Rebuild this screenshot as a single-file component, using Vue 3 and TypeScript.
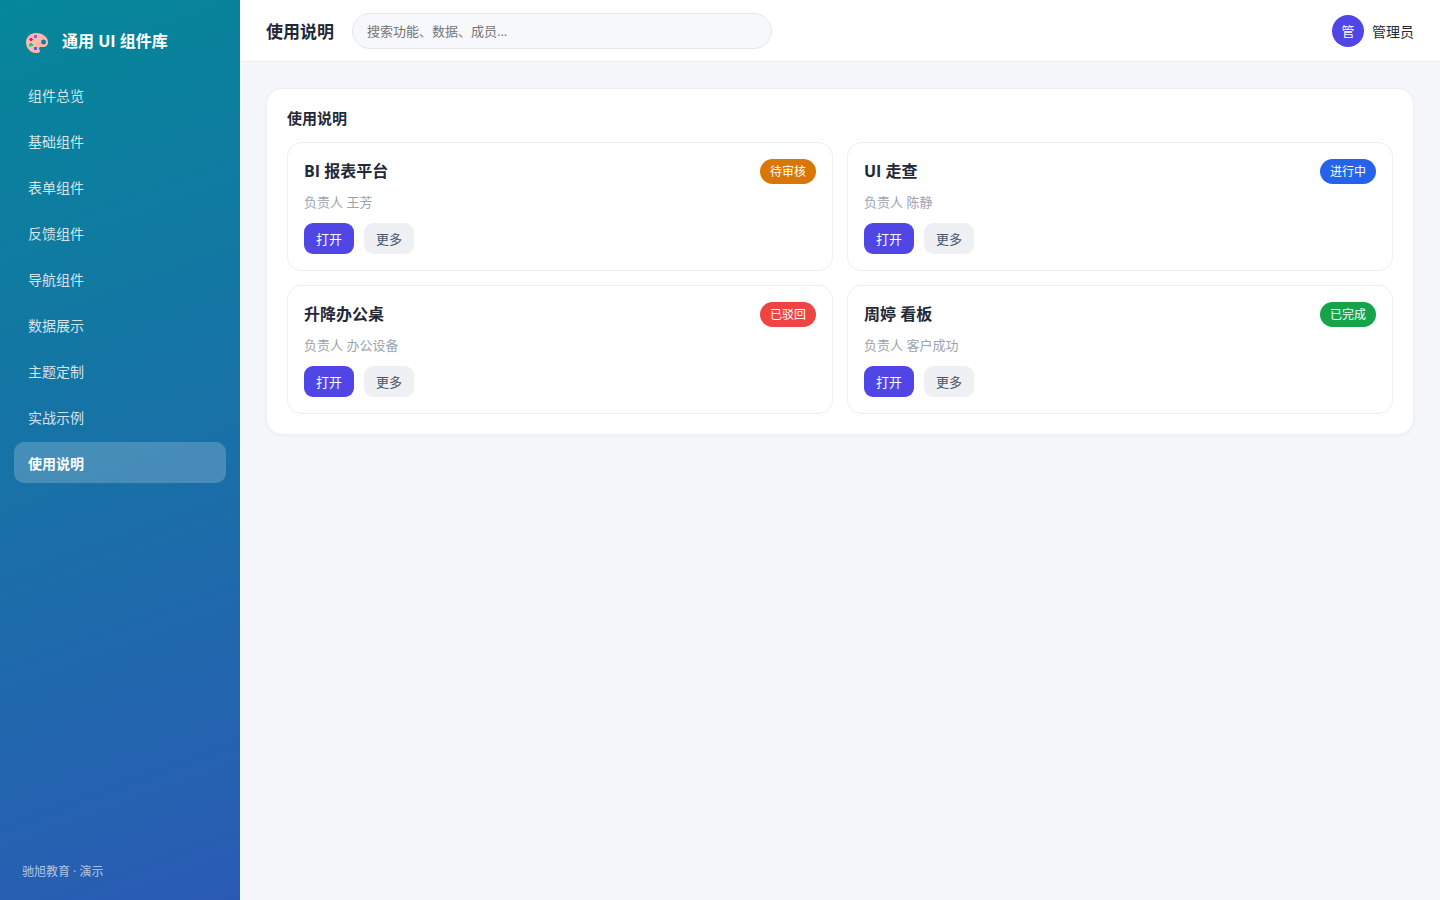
<script setup lang="ts">
import { ref } from 'vue'

interface Project {
  title: string
  owner: string
  status: string
  tone: 'warn' | 'info' | 'danger' | 'ok'
}

const navItems: string[] = [
  '组件总览',
  '基础组件',
  '表单组件',
  '反馈组件',
  '导航组件',
  '数据展示',
  '主题定制',
  '实战示例',
  '使用说明',
]
const active = ref('使用说明')
const keyword = ref('')

const projects: Project[] = [
  { title: 'BI 报表平台', owner: '王芳', status: '待审核', tone: 'warn' },
  { title: 'UI 走查', owner: '陈静', status: '进行中', tone: 'info' },
  { title: '升降办公桌', owner: '办公设备', status: '已驳回', tone: 'danger' },
  { title: '周婷 看板', owner: '客户成功', status: '已完成', tone: 'ok' },
]
</script>

<template>
  <div class="layout">
    <aside class="sidebar">
      <div class="brand">
        <svg class="logo" viewBox="0 0 22 20" aria-hidden="true">
          <path
            fill="#ffb8b0"
            fill-rule="evenodd"
            d="M10 0C4.500 0 0 4.200 0 9.500c0 5.600 4.500 10.500 10.200 10.500 2.300 0 3.800-.6 3.800-2 0-1.200-1-1.600-1-2.600 0-.9.800-1.400 2-1.400h2.500c2.700 0 4.500-1.800 4.500-4.800C22 4 16.800 0 10 0zM17.500 6.500a2.500 2.500 0 1 1 0 5 2.500 2.500 0 0 1 0-5z"
          />
          <rect x="8" y="2" width="3" height="3" fill="#9068c4" />
          <path d="M3 6h1V5h2v1h1v1H6v1H4V7H3z" fill="#f5108c" />
          <path d="M3 11h1v-1h2v1h1v2H5v1H4v-1H3z" fill="#14cf6c" />
          <rect x="8" y="14" width="3" height="3" fill="#4468f5" />
        </svg>
        <span>通用 UI 组件库</span>
      </div>
      <nav class="nav">
        <a
          v-for="item in navItems"
          :key="item"
          href="#"
          class="nav-item"
          :class="{ active: item === active }"
          @click.prevent="active = item"
          >{{ item }}</a
        >
      </nav>
      <div class="foot">驰旭教育 · 演示</div>
    </aside>

    <div class="main">
      <header class="topbar">
        <h1 class="page-title">{{ active }}</h1>
        <input
          v-model="keyword"
          class="search"
          type="text"
          aria-label="搜索"
          placeholder="搜索功能、数据、成员..."
        />
        <div class="user">
          <span class="avatar">管</span>
          <span>管理员</span>
        </div>
      </header>

      <main class="content">
        <section class="panel">
          <h2 class="panel-title">{{ active }}</h2>
          <div class="grid">
            <article v-for="p in projects" :key="p.title" class="card">
              <div class="card-head">
                <h3 class="card-title">{{ p.title }}</h3>
                <span class="tag" :class="p.tone">{{ p.status }}</span>
              </div>
              <p class="owner">负责人 {{ p.owner }}</p>
              <div class="actions">
                <button type="button" class="btn primary">打开</button>
                <button type="button" class="btn">更多</button>
              </div>
            </article>
          </div>
        </section>
      </main>
    </div>
  </div>
</template>

<style>
body {
  margin: 0;
}
</style>

<style scoped>
.layout,
.layout * {
  box-sizing: border-box;
}
.layout {
  display: flex;
  min-height: 100vh;
  background: #f5f7fb;
  color: #1f2937;
  font-family: 'Open Sans', 'Noto Sans CJK SC', sans-serif;
  font-size: 14px;
}
.sidebar {
  width: 240px;
  flex: none;
  display: flex;
  flex-direction: column;
  padding: 22px 14px 18px;
  background: linear-gradient(160deg, #058799, #2a5bb4);
  color: #fff;
}
.brand {
  display: flex;
  align-items: center;
  gap: 14px;
  height: 36px;
  padding: 0 12px;
  font-size: 16px;
  font-weight: 700;
}
.logo {
  width: 22px;
  height: 20px;
  margin-top: 5px;
}
.nav {
  display: flex;
  flex-direction: column;
  gap: 5px;
  margin-top: 16px;
}
.nav-item {
  display: flex;
  align-items: center;
  height: 41px;
  padding: 0 14px;
  border-radius: 10px;
  color: rgba(255, 255, 255, 0.82);
  font-size: 14px;
  text-decoration: none;
}
.nav-item.active {
  background: rgba(255, 255, 255, 0.2);
  color: #fff;
  font-weight: 700;
}
.foot {
  margin-top: auto;
  padding: 0 8px;
  font-size: 12px;
  line-height: 20px;
  color: rgba(255, 255, 255, 0.65);
}
.main {
  flex: 1;
  min-width: 0;
}
.topbar {
  display: flex;
  align-items: center;
  gap: 18px;
  height: 62px;
  padding: 0 26px;
  background: #fff;
  border-bottom: 1px solid #eceef4;
}
.page-title {
  margin: 0;
  font-size: 17px;
  font-weight: 700;
}
.search {
  width: 420px;
  height: 36px;
  padding: 0 14px;
  border: 1px solid #e5e7f0;
  border-radius: 18px;
  background: #f7f8fc;
  color: inherit;
  font: inherit;
  font-size: 13px;
  outline: none;
}
.user {
  display: flex;
  align-items: center;
  gap: 8px;
  margin-left: auto;
}
.avatar {
  display: flex;
  align-items: center;
  justify-content: center;
  width: 32px;
  height: 32px;
  border-radius: 50%;
  background: #4f46e5;
  color: #fff;
  font-size: 13px;
}
.content {
  padding: 26px;
}
.panel {
  padding: 20px;
  border: 1px solid #eff0f5;
  border-radius: 16px;
  background: #fff;
  box-shadow: 0 1px 4px rgba(31, 41, 90, 0.04);
}
.panel-title {
  margin: 0 0 14px;
  font-size: 15px;
  font-weight: 700;
  line-height: 19px;
}
.grid {
  display: grid;
  grid-template-columns: 1fr 1fr;
  gap: 14px;
}
.card {
  padding: 16px;
  border: 1px solid #eeeff3;
  border-radius: 14px;
}
.card-head {
  display: flex;
  align-items: center;
  justify-content: space-between;
}
.card-title {
  margin: 0;
  font-size: 16px;
  font-weight: 700;
  line-height: 25px;
}
.tag {
  padding: 0 10px;
  border-radius: 13px;
  color: #fff;
  font-size: 12px;
  line-height: 25px;
}
.tag.warn {
  background: #d97706;
}
.tag.info {
  background: #2563eb;
}
.tag.danger {
  background: #ef4444;
}
.tag.ok {
  background: #16a34a;
}
.owner {
  margin: 8px 0 11px;
  color: #9ca3af;
  font-size: 13px;
  line-height: 20px;
}
.actions {
  display: flex;
  gap: 10px;
}
.btn {
  height: 31px;
  padding: 0 12px;
  border: 0;
  border-radius: 9px;
  background: #eef0f4;
  color: #475569;
  font: inherit;
  font-size: 13px;
  cursor: pointer;
}
.btn.primary {
  background: #4f46e5;
  color: #fff;
}
</style>
